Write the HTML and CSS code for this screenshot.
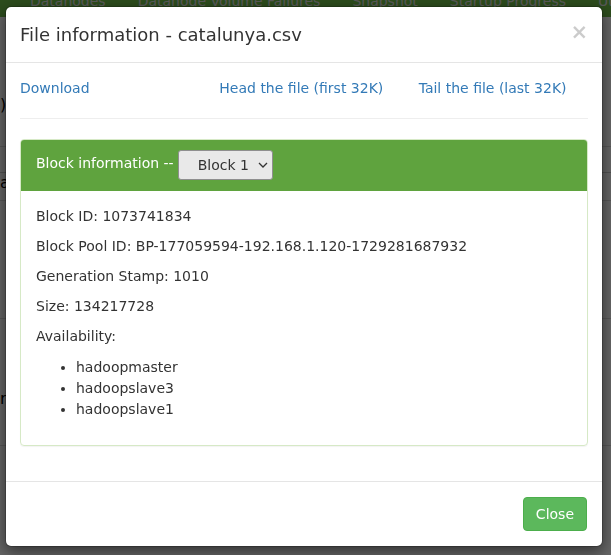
FILE: index.html
```html
<!DOCTYPE html>
<html>
<head>
<meta charset="utf-8">
<link rel="stylesheet" href="styles.css">
</head>
<body>
<div class="page">
  <nav class="navbar">
    <span class="nav-item">Datanodes</span>
    <span class="nav-item">Datanode Volume Failures</span>
    <span class="nav-item">Snapshot</span>
    <span class="nav-item">Startup Progress</span>
    <span class="nav-item">Utilities</span>
  </nav>
  <div class="bg-content">
    <div class="bg-row bg-r1">)</div>
    <div class="bg-row bg-r2"></div>
    <div class="bg-row bg-r3">a</div>
    <div class="bg-row bg-r4"></div>
    <div class="bg-row bg-r5"></div>
    <div class="bg-row bg-r6">ri</div>
    <div class="bg-row bg-r7"></div>
  </div>
</div>

<div class="backdrop"></div>

<div class="modal">
  <div class="modal-header">
    <h4 class="modal-title">File information - catalunya.csv</h4>
    <span class="close">&times;</span>
  </div>
  <div class="modal-body">
    <div class="row">
      <div class="col"><a href="#">Download</a></div>
      <div class="col"><a href="#">Head the file (first 32K)</a></div>
      <div class="col"><a href="#">Tail the file (last 32K)</a></div>
    </div>
    <hr class="sep">
    <div class="panel">
      <div class="panel-heading">
        <span class="panel-title">Block information --</span>
        <span class="select-wrap">
          <select class="block-select"><option>Block 1</option></select>
          <svg class="chev" width="10" height="6" viewBox="0 0 10 6"><path d="M1 1 L5 5 L9 1" fill="none" stroke="#333" stroke-width="1.3"/></svg>
        </span>
      </div>
      <div class="panel-body">
        <p>Block ID: 1073741834</p>
        <p>Block Pool ID: BP-177059594-192.168.1.120-1729281687932</p>
        <p>Generation Stamp: 1010</p>
        <p>Size: 134217728</p>
        <p>Availability:</p>
        <ul class="hosts">
          <li>hadoopmaster</li>
          <li>hadoopslave3</li>
          <li>hadoopslave1</li>
        </ul>
      </div>
    </div>
  </div>
  <div class="modal-footer">
    <button class="btn-close">Close</button>
  </div>
</div>
</body>
</html>
```
FILE: styles.css
```css
* { box-sizing: border-box; }
html, body { margin: 0; padding: 0; }
body {
  width: 611px;
  height: 555px;
  overflow: hidden;
  background: #fff;
  font-family: "DejaVu Sans", sans-serif;
  font-size: 14px;
  line-height: 20px;
  color: #333;
}
.page { height: 555px; }
.navbar {
  height: 17px;
  background: #70c04a;
  display: flex;
  gap: 32px;
  padding-left: 30px;
  overflow: hidden;
}
.nav-item {
  color: #e0e0e0;
  font-size: 14px;
  line-height: 20px;
  margin-top: -9px;
  white-space: nowrap;
}
.bg-content { position: relative; height: 538px; }
.bg-row { position: absolute; left: 0; right: 0; border-top: 1px solid #ddd; font-size: 16px; color: #000; }
.bg-r1 { top: 78px; border: none; }
.bg-r2 { top: 129px; }
.bg-r3 { top: 155px; border-color: #ccc; }
.bg-r4 { top: 183px; }
.bg-r5 { top: 301px; }
.bg-r6 { top: 372px; border: none; }
.bg-r7 { top: 428px; }

.backdrop {
  position: fixed;
  inset: 0;
  background: rgba(0,0,0,0.6);
}

.modal {
  position: absolute;
  left: 5px;
  top: 6px;
  width: 598px;
  background: #fff;
  border: 1px solid rgba(0,0,0,0.2);
  border-radius: 6px;
  box-shadow: 0 5px 15px rgba(0,0,0,0.5);
  background-clip: padding-box;
}
.modal-header {
  display: flex;
  justify-content: space-between;
  align-items: flex-start;
  padding: 15px 15px 15px 14px;
  border-bottom: 1px solid #e5e5e5;
}
.modal-title {
  margin: 0;
  font-size: 18px;
  font-weight: normal;
  line-height: 25px;
  color: #333;
}
.close {
  font-size: 21px;
  line-height: 20px;
  color: #000;
  opacity: 0.2;
  font-weight: bold;
  margin-top: 0px;
  margin-right: -1px;
}
.modal-body {
  padding: 15px 14px;
}
.row {
  display: flex;
  margin: 0 -15px;
}
.col {
  flex: 1 1 0;
  padding: 0 15px;
}
.col a {
  color: #337ab7;
  text-decoration: none;
}
.sep {
  margin: 20px 0;
  border: 0;
  border-top: 1px solid #eee;
}
.panel {
  border: 1px solid #d6e9c6;
  border-radius: 4px;
  margin-bottom: 20px;
  box-shadow: 0 1px 1px rgba(0,0,0,0.05);
}
.panel-heading {
  background: #5fa33e;
  color: #fff;
  padding: 10px 15px 10px 15px;
  border-top-left-radius: 3px;
  border-top-right-radius: 3px;
  display: flex;
  align-items: flex-start;
  gap: 4px;
}
.panel-title { font-size: 14px; line-height: 20px; margin-top: 3px; }
.select-wrap { position: relative; display: inline-block; height: 31px; }
.block-select {
  appearance: none;
  -webkit-appearance: none;
  width: 95px;
  height: 30px;
  padding: 0 0 0 19px;
  font-family: "DejaVu Sans", sans-serif;
  font-size: 14px;
  color: #333;
  background: #e9e9e9;
  border: 1px solid #8f8f8f;
  border-radius: 3px;
}
.chev {
  position: absolute;
  right: 5px;
  top: 12px;
  pointer-events: none;
}
.panel-body { padding: 15px; }
.panel-body p { margin: 0 0 10px; }
.hosts {
  margin: 0 0 10px;
  padding: 1px 0 0 40px;
}
.hosts li { line-height: 21px; }
.modal-footer {
  display: flex;
  justify-content: flex-end;
  padding: 15px;
  border-top: 1px solid #e5e5e5;
}
.btn-close {
  font-family: "DejaVu Sans", sans-serif;
  font-size: 14px;
  line-height: 20px;
  padding: 6px 12px;
  color: #fff;
  background: #5cb85c;
  border: 1px solid #4cae4c;
  border-radius: 4px;
}
```
